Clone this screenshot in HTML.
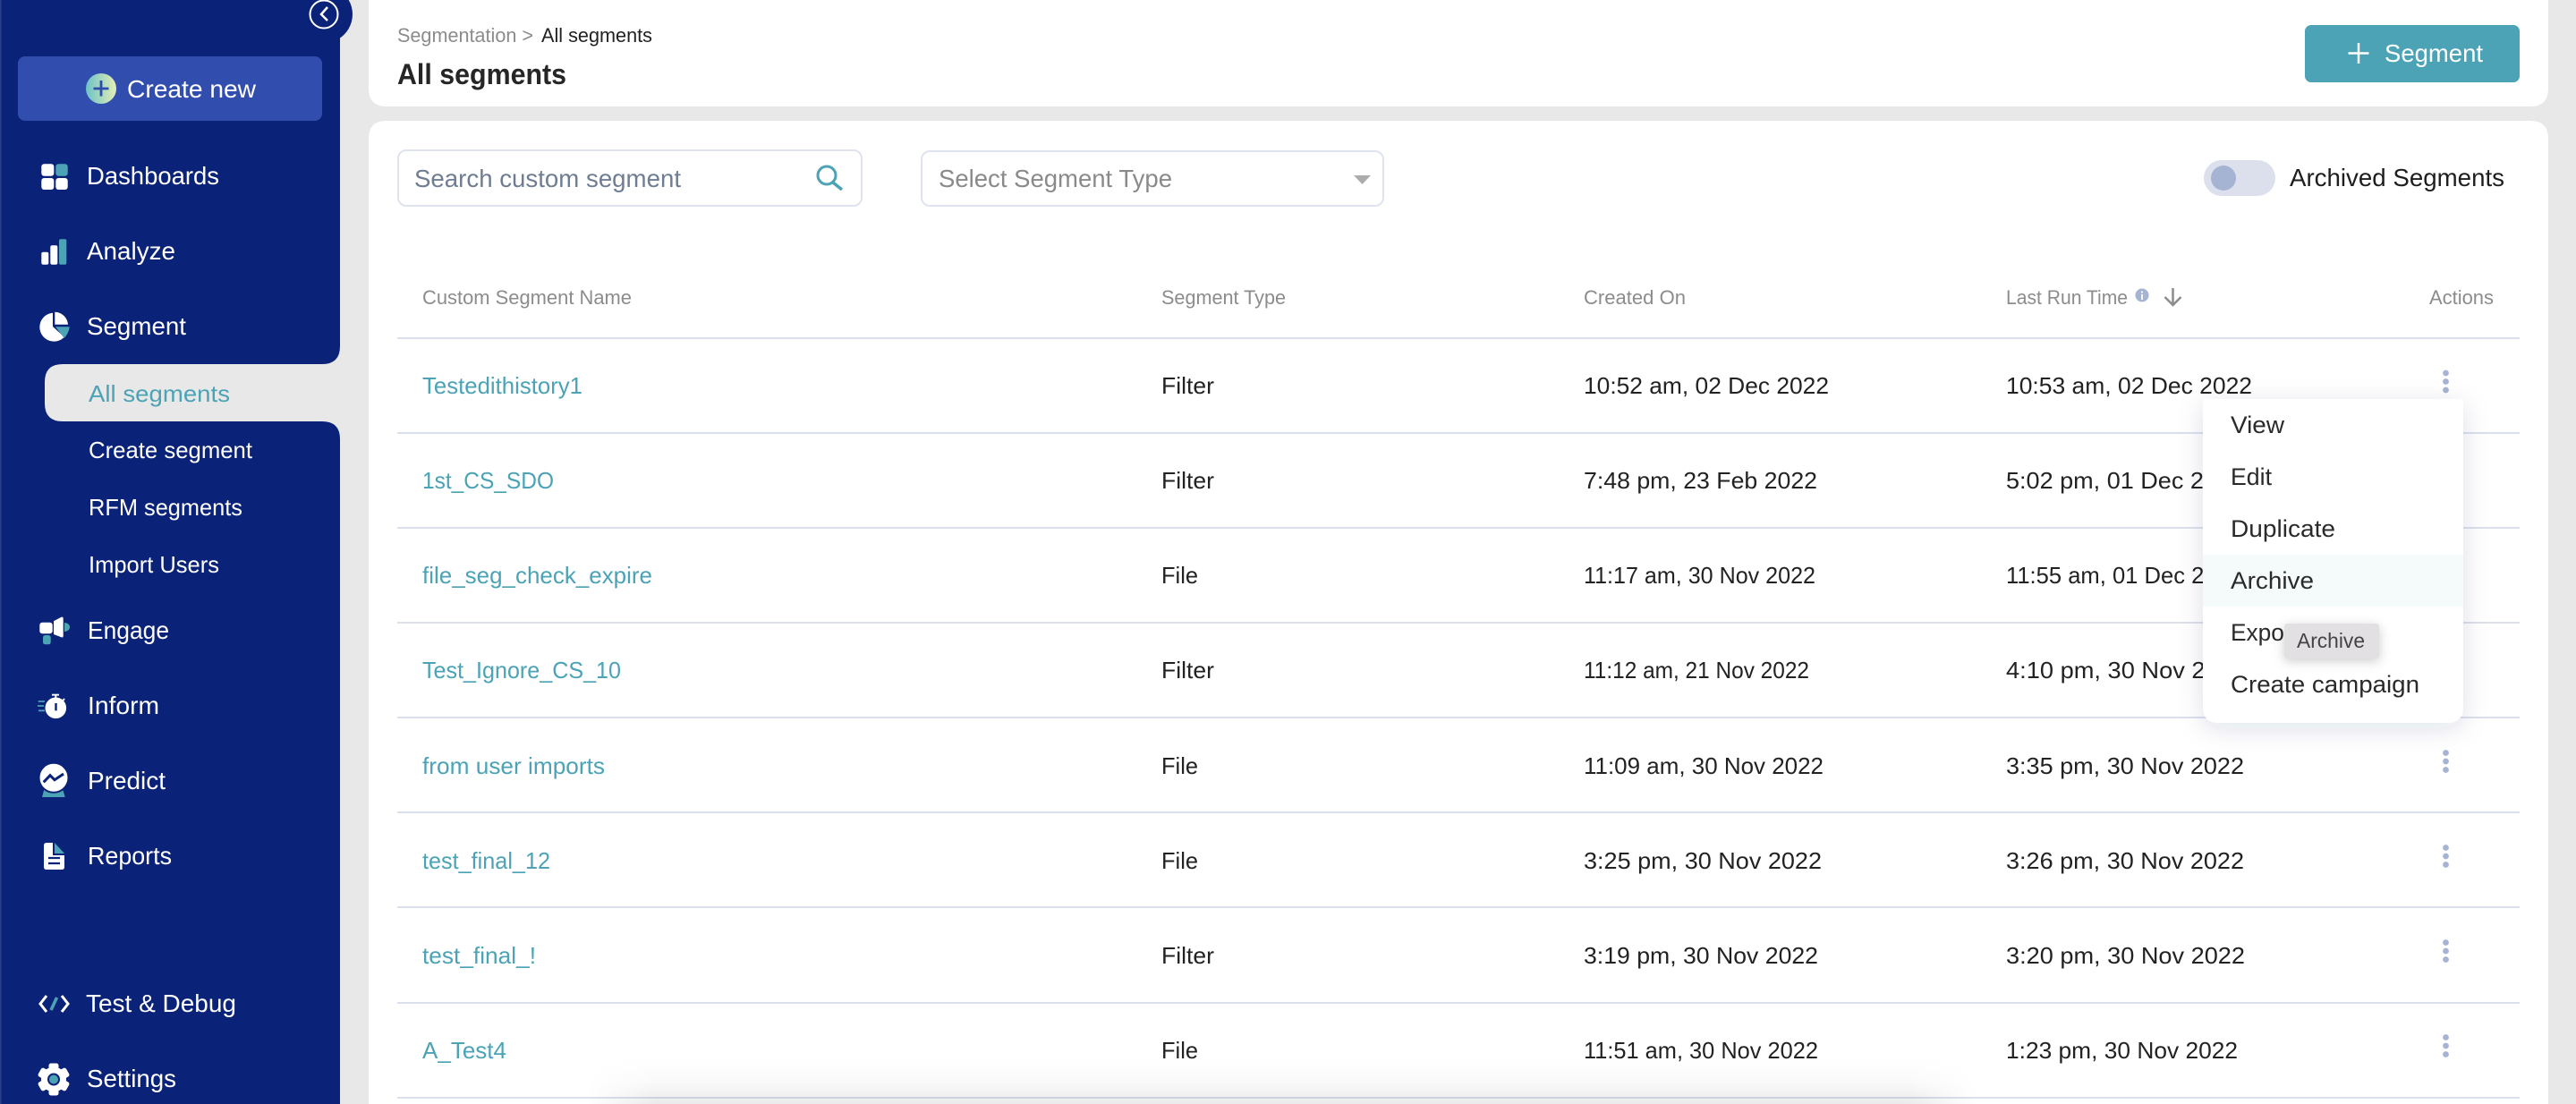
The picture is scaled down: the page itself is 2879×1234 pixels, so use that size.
<!DOCTYPE html>
<html lang="en">
<head>
<meta charset="utf-8">
<title>All segments</title>
<style>
html,body{margin:0;padding:0;width:2879px;height:1234px;overflow:hidden;background:#e8e8e8}
svg{display:block}
text{font-family:"Liberation Sans",sans-serif;white-space:pre}
.nav{font-size:28px;fill:#fff}
.sub{font-size:26px;fill:#fff}
.th{font-size:22px;fill:#8c8c8c}
.td{font-size:26px;fill:#222}
.lnk{font-size:26px;fill:#4ba3b5}
.mi{font-size:27px;fill:#2a2a2a}
</style>
</head>
<body>
<svg xmlns="http://www.w3.org/2000/svg" width="2879" height="1234" viewBox="0 0 2879 1234">
<defs>
<filter id="ms" x="-30%" y="-30%" width="160%" height="160%"><feDropShadow dx="0" dy="6" stdDeviation="14" flood-color="#1a2550" flood-opacity=".13"/></filter>
<filter id="ts" x="-30%" y="-40%" width="160%" height="200%"><feDropShadow dx="0" dy="3" stdDeviation="6" flood-color="#000" flood-opacity=".2"/></filter>
<linearGradient id="cg" x1="0" x2="1" y1="0" y2="0"><stop offset="0" stop-color="#6cc3c6"/><stop offset="1" stop-color="#e4edb7"/></linearGradient>
<linearGradient id="fv" x1="0" x2="0" y1="0" y2="1"><stop offset="0" stop-color="#000" stop-opacity="0"/><stop offset=".5" stop-color="#000" stop-opacity=".02"/><stop offset="1" stop-color="#000" stop-opacity=".08"/></linearGradient>
<linearGradient id="fh" x1="0" x2="1" y1="0" y2="0"><stop offset="0" stop-color="#fff" stop-opacity="0"/><stop offset=".05" stop-color="#fff"/><stop offset=".95" stop-color="#fff"/><stop offset="1" stop-color="#fff" stop-opacity="0"/></linearGradient>
<mask id="fm" maskUnits="userSpaceOnUse" x="655" y="1184" width="1555" height="50"><rect x="655" y="1184" width="1555" height="50" fill="url(#fh)"/></mask>
</defs>

<rect width="2879" height="1234" fill="#e8e8e8"/>

<!-- Header card -->
<path d="M412 0H2848V99Q2848 119 2828 119H432Q412 119 412 99Z" fill="#fff"/>
<text x="444" y="47" class="th" textLength="152" lengthAdjust="spacingAndGlyphs">Segmentation &gt;</text>
<text x="605" y="47" style="font-size:22px;fill:#222" textLength="124" lengthAdjust="spacingAndGlyphs">All segments</text>
<text x="444" y="94" style="font-size:32px;font-weight:700;fill:#262626" textLength="189" lengthAdjust="spacingAndGlyphs">All segments</text>
<rect x="2576" y="28" width="240" height="64" rx="7" fill="#4ba3b5"/>
<path d="M2636 48V71M2624.500 59.500H2647.500" stroke="#fff" stroke-width="2.500" fill="none"/>
<text x="2665" y="69" style="font-size:28px;fill:#fff" textLength="110" lengthAdjust="spacingAndGlyphs">Segment</text>

<!-- Main card -->
<path d="M432 135H2828Q2848 135 2848 155V1234H412V155Q412 135 432 135Z" fill="#fff"/>
<rect x="445" y="168" width="518" height="62" rx="9" fill="#fff" stroke="#dfe3ef" stroke-width="2"/>
<text x="463" y="209" style="font-size:28px;fill:#6f7d92" textLength="298" lengthAdjust="spacingAndGlyphs">Search custom segment</text>
<circle cx="924" cy="196" r="10" fill="none" stroke="#4ba3b5" stroke-width="3"/>
<path d="M931 204L941 212" stroke="#4ba3b5" stroke-width="3.500" fill="none"/>
<rect x="1030" y="169" width="516" height="61" rx="9" fill="#fff" stroke="#dfe3ef" stroke-width="2"/>
<text x="1049" y="209" style="font-size:28px;fill:#8a8a8a" textLength="261" lengthAdjust="spacingAndGlyphs">Select Segment Type</text>
<path d="M1513 196H1532L1522.500 206Z" fill="#acacac"/>
<rect x="2463" y="179" width="80" height="40" rx="20" fill="#dbe0ec"/>
<circle cx="2485" cy="199" r="14" fill="#a6b4d3"/>
<text x="2559" y="208" style="font-size:28px;fill:#1e1e1e" textLength="240" lengthAdjust="spacingAndGlyphs">Archived Segments</text>

<!-- Table header -->
<text x="472" y="340" class="th" textLength="234" lengthAdjust="spacingAndGlyphs">Custom Segment Name</text>
<text x="1298" y="340" class="th" textLength="139" lengthAdjust="spacingAndGlyphs">Segment Type</text>
<text x="1770" y="340" class="th" textLength="114" lengthAdjust="spacingAndGlyphs">Created On</text>
<text x="2242" y="340" class="th" textLength="136" lengthAdjust="spacingAndGlyphs">Last Run Time</text>
<circle cx="2394" cy="330" r="7.500" fill="#a6b4d3"/>
<path d="M2394 329V335M2394 325.500V327.500" stroke="#fff" stroke-width="1.800" fill="none"/>
<path d="M2428.500 322V341M2419.500 332L2428.500 341L2437.500 332" stroke="#8c8c8c" stroke-width="2.500" fill="none"/>
<text x="2715" y="340" class="th" textLength="72" lengthAdjust="spacingAndGlyphs">Actions</text>

<!-- Row lines -->
<g stroke="#dbe0ec" stroke-width="2">
<path d="M444 378H2816M444 484H2816M444 590H2816M444 696H2816M444 802H2816M444 908H2816M444 1014H2816M444 1121H2816M444 1227H2816"/>
</g>

<!-- Rows -->
<text x="472" y="440" class="lnk" textLength="179" lengthAdjust="spacingAndGlyphs">Testedithistory1</text>
<text x="1298" y="440" class="td" textLength="59" lengthAdjust="spacingAndGlyphs">Filter</text>
<text x="1770" y="440" class="td" textLength="274" lengthAdjust="spacingAndGlyphs">10:52 am, 02 Dec 2022</text>
<text x="2242" y="440" class="td" textLength="275" lengthAdjust="spacingAndGlyphs">10:53 am, 02 Dec 2022</text>

<text x="472" y="546" class="lnk" textLength="147" lengthAdjust="spacingAndGlyphs">1st_CS_SDO</text>
<text x="1298" y="546" class="td" textLength="59" lengthAdjust="spacingAndGlyphs">Filter</text>
<text x="1770" y="546" class="td" textLength="261" lengthAdjust="spacingAndGlyphs">7:48 pm, 23 Feb 2022</text>
<text x="2242" y="546" class="td" textLength="266" lengthAdjust="spacingAndGlyphs">5:02 pm, 01 Dec 2022</text>

<text x="472" y="652" class="lnk" textLength="257" lengthAdjust="spacingAndGlyphs">file_seg_check_expire</text>
<text x="1298" y="652" class="td" textLength="41" lengthAdjust="spacingAndGlyphs">File</text>
<text x="1770" y="652" class="td" textLength="259" lengthAdjust="spacingAndGlyphs">11:17 am, 30 Nov 2022</text>
<text x="2242" y="652" class="td" textLength="264" lengthAdjust="spacingAndGlyphs">11:55 am, 01 Dec 2022</text>

<text x="472" y="758" class="lnk" textLength="222" lengthAdjust="spacingAndGlyphs">Test_Ignore_CS_10</text>
<text x="1298" y="758" class="td" textLength="59" lengthAdjust="spacingAndGlyphs">Filter</text>
<text x="1770" y="758" class="td" textLength="252" lengthAdjust="spacingAndGlyphs">11:12 am, 21 Nov 2022</text>
<text x="2242" y="758" class="td" textLength="268" lengthAdjust="spacingAndGlyphs">4:10 pm, 30 Nov 2022</text>

<text x="472" y="865" class="lnk" textLength="204" lengthAdjust="spacingAndGlyphs">from user imports</text>
<text x="1298" y="865" class="td" textLength="41" lengthAdjust="spacingAndGlyphs">File</text>
<text x="1770" y="865" class="td" textLength="268" lengthAdjust="spacingAndGlyphs">11:09 am, 30 Nov 2022</text>
<text x="2242" y="865" class="td" textLength="266" lengthAdjust="spacingAndGlyphs">3:35 pm, 30 Nov 2022</text>

<text x="472" y="971" class="lnk" textLength="143" lengthAdjust="spacingAndGlyphs">test_final_12</text>
<text x="1298" y="971" class="td" textLength="41" lengthAdjust="spacingAndGlyphs">File</text>
<text x="1770" y="971" class="td" textLength="266" lengthAdjust="spacingAndGlyphs">3:25 pm, 30 Nov 2022</text>
<text x="2242" y="971" class="td" textLength="266" lengthAdjust="spacingAndGlyphs">3:26 pm, 30 Nov 2022</text>

<text x="472" y="1077" class="lnk" textLength="127" lengthAdjust="spacingAndGlyphs">test_final_!</text>
<text x="1298" y="1077" class="td" textLength="59" lengthAdjust="spacingAndGlyphs">Filter</text>
<text x="1770" y="1077" class="td" textLength="262" lengthAdjust="spacingAndGlyphs">3:19 pm, 30 Nov 2022</text>
<text x="2242" y="1077" class="td" textLength="267" lengthAdjust="spacingAndGlyphs">3:20 pm, 30 Nov 2022</text>

<text x="472" y="1183" class="lnk" textLength="94" lengthAdjust="spacingAndGlyphs">A_Test4</text>
<text x="1298" y="1183" class="td" textLength="41" lengthAdjust="spacingAndGlyphs">File</text>
<text x="1770" y="1183" class="td" textLength="262" lengthAdjust="spacingAndGlyphs">11:51 am, 30 Nov 2022</text>
<text x="2242" y="1183" class="td" textLength="259" lengthAdjust="spacingAndGlyphs">1:23 pm, 30 Nov 2022</text>

<!-- Kebabs -->
<g fill="#a6b4d3">
<circle cx="2733.500" cy="417" r="3.400"/><circle cx="2733.500" cy="426.500" r="3.400"/><circle cx="2733.500" cy="436" r="3.400"/>
<circle cx="2733.500" cy="841.500" r="3.400"/><circle cx="2733.500" cy="851" r="3.400"/><circle cx="2733.500" cy="860.500" r="3.400"/>
<circle cx="2733.500" cy="947.500" r="3.400"/><circle cx="2733.500" cy="957" r="3.400"/><circle cx="2733.500" cy="966.500" r="3.400"/>
<circle cx="2733.500" cy="1053.500" r="3.400"/><circle cx="2733.500" cy="1063" r="3.400"/><circle cx="2733.500" cy="1072.500" r="3.400"/>
<circle cx="2733.500" cy="1159.500" r="3.400"/><circle cx="2733.500" cy="1169" r="3.400"/><circle cx="2733.500" cy="1178.500" r="3.400"/>
</g>

<!-- Bottom fade -->
<rect x="655" y="1184" width="1555" height="50" fill="url(#fv)" mask="url(#fm)"/>

<!-- Actions menu -->
<path d="M2465 446H2750Q2753 446 2753 449V790Q2753 808 2735 808H2480Q2462 808 2462 790V449Q2462 446 2465 446Z" fill="#fff" filter="url(#ms)"/>
<rect x="2462" y="620" width="291" height="58" fill="#f5fafb"/>
<text x="2493" y="484" class="mi" textLength="60" lengthAdjust="spacingAndGlyphs">View</text>
<text x="2493" y="542" class="mi" textLength="46" lengthAdjust="spacingAndGlyphs">Edit</text>
<text x="2493" y="600" class="mi" textLength="117" lengthAdjust="spacingAndGlyphs">Duplicate</text>
<text x="2493" y="658" class="mi" textLength="93" lengthAdjust="spacingAndGlyphs">Archive</text>
<text x="2493" y="716" class="mi" textLength="76" lengthAdjust="spacingAndGlyphs">Export</text>
<text x="2493" y="774" class="mi" textLength="211" lengthAdjust="spacingAndGlyphs">Create campaign</text>
<rect x="2553" y="697" width="106" height="39" rx="3" fill="#e2e0e3" filter="url(#ts)"/>
<text x="2567" y="724" style="font-size:23px;fill:#444" textLength="76" lengthAdjust="spacingAndGlyphs">Archive</text>

<!-- Sidebar -->
<path d="M340 0H389.700A32 32 0 0 1 362 48H340Z" fill="#0a2277"/>
<path d="M0 0H380V387Q380 407 360 407H70Q50 407 50 427V451Q50 471 70 471H360Q380 471 380 491V1234H0Z" fill="#0a2277"/>
<rect x="0" y="0" width="1.500" height="1234" fill="#2a3d88"/>
<circle cx="362" cy="16" r="15.500" fill="none" stroke="#fff" stroke-width="2"/>
<path d="M366 8L359 16L366 23" fill="none" stroke="#fff" stroke-width="2.500"/>

<rect x="20" y="63" width="340" height="72" rx="8" fill="#314eaf"/>
<circle cx="113" cy="99" r="17" fill="url(#cg)"/>
<path d="M113 90V107.500M104.500 99H121.500" stroke="#2e4ba9" stroke-width="2.800" fill="none"/>
<text x="142" y="109" class="nav" textLength="144" lengthAdjust="spacingAndGlyphs">Create new</text>

<!-- Dashboards -->
<rect x="46.300" y="183.300" width="14" height="13.400" rx="3" fill="#fff"/>
<rect x="62.300" y="183.300" width="13.400" height="13.400" rx="3" fill="#4ba3b5"/>
<rect x="46.300" y="199" width="14" height="13" rx="3" fill="#fff"/>
<rect x="62.300" y="199" width="13.400" height="13" rx="3" fill="#fff"/>
<text x="97" y="206" class="nav" textLength="148" lengthAdjust="spacingAndGlyphs">Dashboards</text>

<!-- Analyze -->
<rect x="46.300" y="281.700" width="8" height="14" rx="2" fill="#fff"/>
<rect x="56.300" y="274.300" width="8" height="21.400" rx="2" fill="#fff"/>
<rect x="66" y="267.300" width="8.300" height="28.400" rx="2" fill="#4ba3b5"/>
<text x="97" y="290" class="nav" textLength="99" lengthAdjust="spacingAndGlyphs">Analyze</text>

<!-- Segment -->
<path d="M59 349.700V365L71.800 376.800A16 16 0 1 1 59 349.700Z" fill="#fff"/>
<path d="M61.300 348.700A15 15 0 0 1 76 362.700H61.300Z" fill="#fff"/>
<path d="M62 365.300H77.700Q77 372.500 71.700 378Z" fill="#4ba3b5"/>
<text x="97" y="374" class="nav" textLength="111" lengthAdjust="spacingAndGlyphs">Segment</text>

<!-- Submenu -->
<text x="99" y="449" class="sub" style="fill:#4ba3b5" textLength="158" lengthAdjust="spacingAndGlyphs">All segments</text>
<text x="99" y="512" class="sub" textLength="183" lengthAdjust="spacingAndGlyphs">Create segment</text>
<text x="99" y="576" class="sub" textLength="172" lengthAdjust="spacingAndGlyphs">RFM segments</text>
<text x="99" y="640" class="sub" textLength="146" lengthAdjust="spacingAndGlyphs">Import Users</text>

<!-- Engage -->
<rect x="44.300" y="695.700" width="14.400" height="12.600" rx="3" fill="#fff"/>
<path d="M60 694.300L68.500 689.800Q70.700 689 70.700 691.500V710.500Q70.700 713 68.500 712.300L60 709Z" fill="#fff"/>
<path d="M72 696A6 5 0 0 1 72 706Z" fill="#4ba3b5"/>
<rect x="48" y="710" width="8.700" height="10.300" rx="2.500" fill="#4ba3b5"/>
<text x="98" y="714" class="nav" textLength="91" lengthAdjust="spacingAndGlyphs">Engage</text>

<!-- Inform -->
<circle cx="62.300" cy="791.300" r="11.800" fill="#fff"/>
<rect x="58" y="775.700" width="8" height="1.900" fill="#fff"/>
<rect x="61.300" y="777.500" width="2" height="3" fill="#fff"/>
<path d="M70 783.500L72 781" stroke="#fff" stroke-width="2" fill="none"/>
<rect x="61.300" y="786" width="2.400" height="8.300" fill="#0a2277"/>
<path d="M42.700 784H50M42 789H49M43 794.300H50" stroke="#4ba3b5" stroke-width="1.800" fill="none"/>
<text x="98" y="798" class="nav" textLength="80" lengthAdjust="spacingAndGlyphs">Inform</text>

<!-- Predict -->
<path d="M50 880H69.500L72.700 891H47Z" fill="#4ba3b5"/>
<circle cx="60" cy="869.300" r="16.500" fill="#fff" stroke="#0a2277" stroke-width="2"/>
<path d="M48.700 874.300L56 866.700L61 871.700L71 865" stroke="#0a2277" stroke-width="3" fill="none"/>
<text x="98" y="882" class="nav" textLength="87" lengthAdjust="spacingAndGlyphs">Predict</text>

<!-- Reports -->
<path d="M52 942H59V956H72V969Q72 972 69 972H52Q49 972 49 969V945Q49 942 52 942Z" fill="#fff"/>
<path d="M61 942L72 954H61Z" fill="#4ba3b5"/>
<path d="M54 959H67M54 965H67" stroke="#0a2277" stroke-width="2.200" fill="none"/>
<text x="98" y="966" class="nav" textLength="94" lengthAdjust="spacingAndGlyphs">Reports</text>

<!-- Test & Debug -->
<path d="M52 1113L45 1122L52 1131M69 1113L76 1122L69 1131" stroke="#fff" stroke-width="3" fill="none"/>
<path d="M57 1129L63.500 1115" stroke="#4ba3b5" stroke-width="3.500" fill="none"/>
<text x="96" y="1131" class="nav" textLength="168" lengthAdjust="spacingAndGlyphs">Test &amp; Debug</text>

<!-- Settings -->
<g fill="#fff">
<circle cx="60" cy="1206.500" r="14"/>
<rect x="54.500" y="1188.500" width="11" height="36" rx="2.500"/>
<rect x="54.500" y="1188.500" width="11" height="36" rx="2.500" transform="rotate(60 60 1206.500)"/>
<rect x="54.500" y="1188.500" width="11" height="36" rx="2.500" transform="rotate(120 60 1206.500)"/>
</g>
<circle cx="60" cy="1206.500" r="6" fill="#4ba3b5" stroke="#0a2277" stroke-width="2"/>
<text x="97" y="1215" class="nav" textLength="100" lengthAdjust="spacingAndGlyphs">Settings</text>
</svg>
</body>
</html>
